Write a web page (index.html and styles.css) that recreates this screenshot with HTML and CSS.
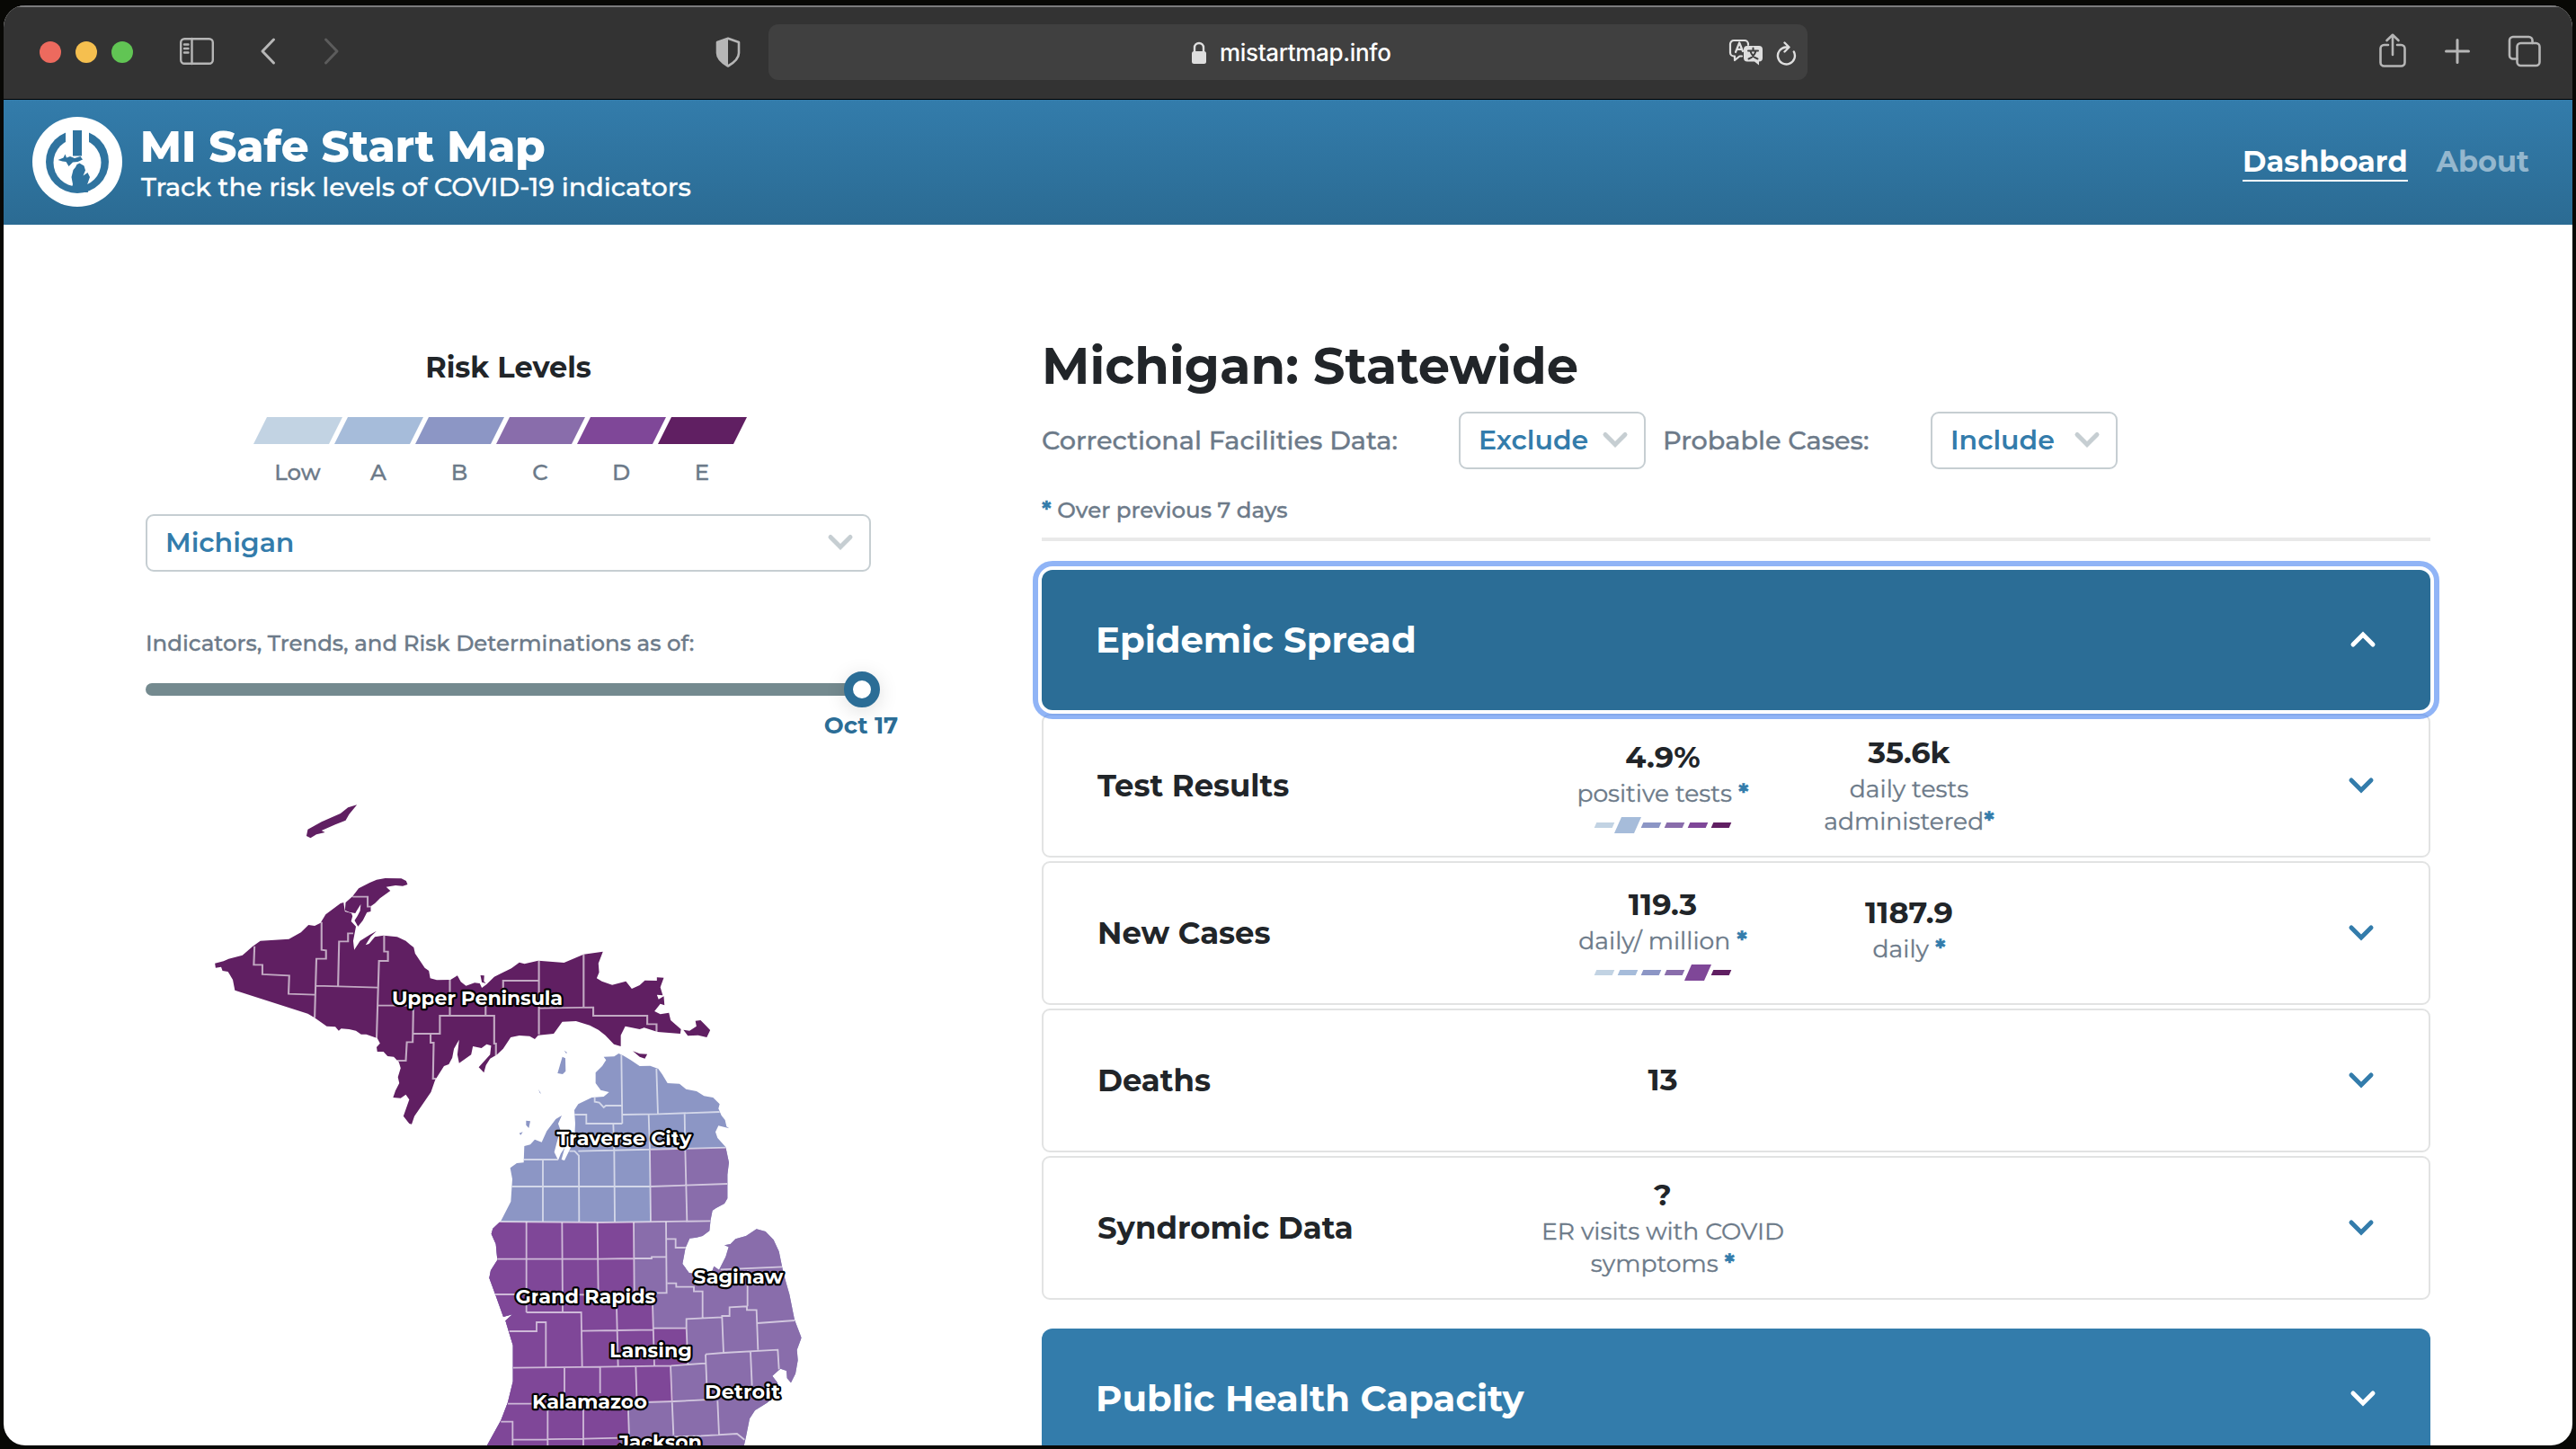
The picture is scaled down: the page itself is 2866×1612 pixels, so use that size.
FILE: index.html
```
<!DOCTYPE html>
<html lang="en">
<head>
<meta charset="utf-8">
<title>MI Safe Start Map</title>
<link rel="stylesheet" href="styles.css">
</head>
<body>
<div class="window">
  <div class="toolbar">
    <div class="lights"><i class="light red"></i><i class="light yellow"></i><i class="light green"></i></div>
    <svg class="ico sidebar" width="40" height="32" viewBox="0 0 40 32"><rect x="2.2" y="2.2" width="35.6" height="27.6" rx="4"/><path d="M14.5 2v28M6 8.5h4.5M6 13h4.5M6 17.5h4.5"/></svg>
    <svg class="ico back" width="20" height="32" viewBox="0 0 20 32"><path d="M16.500 3L4 16l12.500 13"/></svg>
    <svg class="ico forward" width="20" height="32" viewBox="0 0 20 32"><path d="M3.500 3L16 16 3.500 29"/></svg>
    <svg class="shield" width="30" height="36" viewBox="0 0 30 36"><path class="shield-line" d="M15 2.800L27 7v12c0 6-5 10.500-12 14.500C8 29.500 3 25 3 19V7z"/><path class="shield-fill" d="M15 2.800v30.700C8 29.500 3 25 3 19V7z"/></svg>
    <div class="urlbar">
      <div class="address">
        <svg class="lock" width="18" height="26" viewBox="0 0 18 26"><path class="lock-shackle" d="M4 12V7a5 5 0 0 1 10 0v5"/><rect class="lock-body" x="1" y="11" width="16" height="14" rx="2.500"/></svg>
        <span>mistartmap.info</span>
      </div>
      <svg class="translate" width="40" height="30" viewBox="0 0 40 30"><path class="thin" d="M15 19.500h-2.500L7 24v-4.500H6a4 4 0 0 1-4-4V6a4 4 0 0 1 4-4h12a4 4 0 0 1 4 4v1"/><path class="thin" d="M8 15l4.200-10.500L16 14M9.500 11.800h5"/><path class="bubble" d="M21 8h13a4 4 0 0 1 4 4v9.500a4 4 0 0 1-4 4v4l-5-4h-8a4 4 0 0 1-4-4V12a4 4 0 0 1 4-4z"/><path class="glyph" d="M27.500 10.500v2.500M22 13.500h11M30.500 13.500c-1 4-4 7.500-8 9M24.500 14c1 3.500 4 7 8 8.500"/></svg>
      <svg class="reload" width="24" height="28" viewBox="0 0 24 28"><path d="M20.800 12.500A9.500 9.500 0 1 1 12 7.500h2.500M10.500 2.500l5 5-5 5"/></svg>
    </div>
    <svg class="ico share" width="32" height="40" viewBox="0 0 32 40"><path d="M11 14H6.500a4 4 0 0 0-4 4v15.500a4 4 0 0 0 4 4h19a4 4 0 0 0 4-4V18a4 4 0 0 0-4-4H21M16 25V3.500M9.500 9L16 2.800 22.500 9"/></svg>
    <svg class="ico plus" width="30" height="30" viewBox="0 0 30 30"><path d="M15 2.500v25M2.500 15h25"/></svg>
    <svg class="ico tabs" width="38" height="36" viewBox="0 0 38 36"><rect x="10.500" y="9" width="25" height="25" rx="4"/><path d="M27.500 9V6a4 4 0 0 0-4-4H6a4 4 0 0 0-4 4v16.500a4 4 0 0 0 4 4h4.500"/></svg>
  </div>

  <header class="site-header">
    <svg class="logo" width="100" height="100" viewBox="0 0 100 100">
      <circle class="w" cx="50" cy="50" r="50"/>
      <circle class="b" cx="50" cy="50" r="35"/>
      <circle class="w" cx="50" cy="51" r="26.500"/>
      <path class="w" d="M37 12h26v24H37z"/>
      <path class="b" d="M45 15h10v28.500H45z"/>
      <path class="b" d="M28.500 48l6-2.500 2-4 1.500 4 4-1.500 5 2 6.500-2 2.500 3.500-5.500 2.500-5.500.5-4.500 4.500-3-5-4-.5z"/>
      <path class="b" d="M49.500 53l3-1.500 5 3 1.500 5-2.500 6 5-3.500 2.500 5-3 8.500L62 84H42l3-9-1.500-8 2-8 2.500-3z"/>
    </svg>
    <div class="brand">
      <div class="brand-name">MI Safe Start Map</div>
      <div class="brand-tag">Track the risk levels of COVID-19 indicators</div>
    </div>
    <nav class="nav"><a class="active">Dashboard</a><a>About</a></nav>
  </header>

  <main class="page">
    <section class="left">
      <h3>Risk Levels</h3>
      <div class="legend">
        <div class="level low"><i></i><span>Low</span></div>
        <div class="level a"><i></i><span>A</span></div>
        <div class="level b"><i></i><span>B</span></div>
        <div class="level c"><i></i><span>C</span></div>
        <div class="level d"><i></i><span>D</span></div>
        <div class="level e"><i></i><span>E</span></div>
      </div>
      <div class="select region">Michigan<svg class="chev" width="30" height="20" viewBox="0 0 30 20"><path d="M4 4.500l11 11 11-11"/></svg></div>
      <div class="asof">Indicators, Trends, and Risk Determinations as of:</div>
      <div class="slider"><div class="knob"></div></div>
      <div class="date">Oct 17</div>
      <svg class="map" width="812" height="728" viewBox="162 880 812 728">
        <defs>
          <clipPath id="lower"><use href="#lp"/></clipPath>
        </defs>
        <g class="upper" transform="translate(220 880) scale(.38265 .33333)">
          <path class="fe" d="M50 575L75 568 90 560 130 548 160 518 182 500 265 494 300 472 322 447 340 450 357 440 372 412 415 375 424 372 428 402 447 408 450 418 446 435 460 452 452 500 455 530 472 500 500 480 520 467 503 486 488 514 498 510 515 487 540 482 580 487 605 500 617 512 628 522 632 542 660 590 672 600 676 625 695 631 735 630 755 616 765 637 780 650 805 640 820 642 826 657 840 645 862 620 880 610 912 592 935 572 950 577 990 566 1065 573 1122 545 1178 536 1165 575 1167 605 1160 625 1175 635 1205 647 1245 635 1262 660 1285 648 1300 632 1335 633 1335 622 1355 623 1345 655 1352 682 1335 680 1340 695 1355 685 1357 715 1345 710 1328 735 1345 745 1370 740 1375 765 1405 795 1403 810 1337 804 1298 790 1285 795 1243 785 1230 815 1230 852 1210 845 1185 815 1165 797 1140 782 1100 768 1060 770 1035 810 990 815 980 828 965 818 935 816 910 822 888 860 870 880 850 893 838 915 832 940 817 922 850 880 853 850 840 845 825 858 800 852 795 880 760 908 755 880 760 830 745 860 740 890 730 912 716 918 690 965 678 1005 630 1085 622 1112 615 1110 598 1085 615 1030 605 1013 590 1025 568 1023 575 1000 586 975 582 955 590 925 585 905 570 887 552 885 540 870 522 870 520 855 530 842 522 825 490 812 475 812 460 800 440 795 417 793 410 800 400 787 375 785 340 757 320 743 108 665 102 630 88 603 72 600 68 587 52 590z"/>
          <path class="fe" d="M430 372L450 352 468 325 500 306 520 296 545 291 592 292 606 300 610 312 596 317 575 315 548 320 560 333 530 358 515 375 503 385 503 402 492 405 480 432 466 452 456 432 464 418 472 400 474 378 462 400 458 408 440 404 428 398zM463 46L437 55 415 75 360 103 320 128 316 150 328 157 345 145 370 138 360 132 400 112 430 98 440 78zM1412 797L1430 800 1450 785 1447 767 1462 765 1475 780 1490 798 1480 822 1455 815 1425 817zM1265 868L1285 877 1307 878 1300 893 1285 887zM822 615L833 616 832 635 838 642 826 638z"/>
          <path class="county" d="M165 518L163 580H188V612L266 616 264 677 340 680M360 437V530L373 532V560L345 560 340 757M345 650L522 656M452 475H437V502H411L408 650M542 482V536H553V567H527L520 825M525 716H627M627 716L625 838H608L605 900H580M627 810H704V750H862V843H867V882M733 630V750M677 810V840H686L684 960H694M837 750V690M888 660V633H992M992 566V812M992 725L1150 722V750H1307V778H1334V804M1122 545V720M450 353H494V386H503"/>
        </g>
        <g transform="translate(520 1140) scale(.33333)">
          <path class="fb" id="lp" d="M505 96L520 103 545 118 575 138 610 137 637 147 650 165 668 195 708 197 730 215 765 222 790 238 820 243 842 265 838 280 848 303 860 318 865 340 874 346 838 337 828 358 835 378 862 408 873 460 868 500 868 580 858 597 830 612 818 620 812 650 808 688 785 705 765 710 742 713 728 745 718 798 740 828 790 836 815 828 823 806 840 818 862 775 872 742 858 736 878 732 895 715 930 705 965 682 995 690 1022 718 1040 757 1055 830 1075 900 1092 985 1115 1045 1100 1085 1103 1120 1095 1165 1080 1195 1067 1180 1065 1155 1045 1148 1018 1172 1035 1195 1030 1235 1000 1262 960 1287 942 1315 938 1335 930 1375 920 1420H55L65 1405 112 1320 135 1260 152 1190 152 1070 127 988 150 967 120 975 95 905 73 845 78 820 100 785 95 732 80 698 85 680 112 655 145 590 148 545 150 515 143 478 165 462 188 460 190 405 210 400 225 383 248 392 265 355 295 315 315 303 303 330 310 350 290 425 303 452 312 430 325 410 314 450 324 453 345 410 358 370 360 330 357 285 370 265 415 243 455 240 473 225 445 218 428 195 428 160 450 138 463 118 455 107 490 106z"/>
          <path class="fb" d="M317 107L327 112 328 155 318 165 301 162zM323 86L333 93 330 96zM237 215L246 230 242 228zM196 320L210 322 205 345 196 335zM173 362L185 358 178 368z"/>
          <g clip-path="url(#lower)">
            <path class="fc" d="M0 658H612L609 415 870 410 900 400H1200V1450H0z"/>
            <path class="fd" d="M0 658L555 660 558 900 618 896 622 1015 731 1012 736 1132 678 1138 688 1258 536 1262 540 1380 508 1382V1450H0z"/>
            <path class="county" d="M514 100L517 330M425 243V257L440 260 455 276 462 270H516M350 300H397V330H517M517 300L638 298 842 291M631 147L636 298M605 300L609 420 612 658M487 332L490 420 492 658M725 298L727 415 733 655M370 422L870 410M340 422H358L372 437 373 658M188 450H303M252 450V658M148 540H370L610 540 868 531M108 657L450 660 812 655"/>
            <path class="county" transform="translate(0 630)" d="M197 28V330M316 30L318 328M434 30L437 270M555 30L557 262M98 152H435L555 150H615V145H662M663 28L665 265H620M665 85H695V114H730M668 233H697V245H756V260H785V350M90 270H165L560 272M197 330H380L383 510M140 393H231V363H262V513M383 392L500 390 620 388 622 383 731 382M498 310L503 510M618 300L624 508M152 515L443 512 680 508 795 500M731 382L736 502M731 382V352L850 346V342L875 342V313L933 310V322H965L970 455M850 346L855 465M795 470L855 465 1036 455 1040 520M795 470L800 600M935 310V190M845 187L1052 178M968 366L1092 357M945 462L950 575M324 513V600M443 512V600M562 510L565 610M678 508L688 740M590 630L690 627 830 620M135 635H215M112 695H151V774M268 650V774M387 650V774M152 755L387 752 540 748M536 632L540 750M835 625L840 738M690 745L780 742 900 735 925 755"/>
          </g>
        </g>
        <g class="labels">
          <text x="436" y="1117.500" textLength="190">Upper Peninsula</text>
          <text x="619.500" y="1274" textLength="150">Traverse City</text>
          <text x="573.500" y="1450" textLength="156">Grand Rapids</text>
          <text x="771.500" y="1428" textLength="100">Saginaw</text>
          <text x="678" y="1510" textLength="92">Lansing</text>
          <text x="784" y="1556" textLength="84">Detroit</text>
          <text x="592" y="1566.500" textLength="128">Kalamazoo</text>
          <text x="688" y="1612" textLength="93">Jackson</text>
        </g>
      </svg>
    </section>

    <section class="right">
      <h1>Michigan: Statewide</h1>
      <div class="filters">
        <label>Correctional Facilities Data:</label>
        <div class="select">Exclude<svg class="chev" width="30" height="20" viewBox="0 0 30 20"><path d="M4 4.500l11 11 11-11"/></svg></div>
        <label>Probable Cases:</label>
        <div class="select">Include<svg class="chev" width="30" height="20" viewBox="0 0 30 20"><path d="M4 4.500l11 11 11-11"/></svg></div>
      </div>
      <div class="note"><b>*</b> Over previous 7 days</div>

      <div class="section-bar open"><span>Epidemic Spread</span><svg class="chev" width="32" height="22" viewBox="0 0 32 22"><path d="M5 16L16 5l11 11"/></svg></div>
      <div class="cards">
        <article class="card">
          <h2>Test Results</h2>
          <div class="stat"><strong>4.9%</strong><p>positive tests <b>*</b></p><div class="scale"><i class="low"></i><i class="a on"></i><i class="b"></i><i class="c"></i><i class="d"></i><i class="e"></i></div></div>
          <div class="stat"><strong>35.6k</strong><p>daily tests<br>administered<b>*</b></p></div>
          <svg class="chev" width="32" height="22" viewBox="0 0 32 22"><path d="M5 5l11 11L27 5"/></svg>
        </article>
        <article class="card">
          <h2>New Cases</h2>
          <div class="stat"><strong>119.3</strong><p>daily/ million <b>*</b></p><div class="scale"><i class="low"></i><i class="a"></i><i class="b"></i><i class="c"></i><i class="d on"></i><i class="e"></i></div></div>
          <div class="stat raised"><strong>1187.9</strong><p>daily <b>*</b></p></div>
          <svg class="chev" width="32" height="22" viewBox="0 0 32 22"><path d="M5 5l11 11L27 5"/></svg>
        </article>
        <article class="card">
          <h2>Deaths</h2>
          <div class="stat"><strong>13</strong></div>
          <div class="stat"></div>
          <svg class="chev" width="32" height="22" viewBox="0 0 32 22"><path d="M5 5l11 11L27 5"/></svg>
        </article>
        <article class="card">
          <h2>Syndromic Data</h2>
          <div class="stat"><strong>?</strong><p>ER visits with COVID<br>symptoms <b>*</b></p></div>
          <div class="stat"></div>
          <svg class="chev" width="32" height="22" viewBox="0 0 32 22"><path d="M5 5l11 11L27 5"/></svg>
        </article>
      </div>
      <div class="section-bar"><span>Public Health Capacity</span><svg class="chev" width="32" height="22" viewBox="0 0 32 22"><path d="M5 5l11 11L27 5"/></svg></div>
    </section>
  </main>
</div>
</body>
</html>
```
FILE: styles.css
```
:root {
  --low: #c2d3e3;
  --a: #a6bcda;
  --b: #8c96c5;
  --c: #896dab;
  --d: #7f4798;
  --e: #601f62;
  --blue: #337cab;
  --deep: #2b6d96;
  --slate: #6c7a89;
  --ink: #212529;
}
* { box-sizing: border-box; margin: 0; }
html { overflow: hidden; }
body {
  height: 1612px;
  overflow: hidden;
  padding: 6px 4px 4px;
  background: #080805;
  font-family: Montserrat, Inter, "Open Sans", sans-serif;
  color: var(--ink);
}
svg { display: block; flex: none; }

.window {
  height: 1602px;
  overflow: hidden;
  border-radius: 24px;
  background: #fff;
}

/* Browser toolbar */
.toolbar {
  display: flex;
  align-items: flex-start;
  height: 105px;
  border-top: 2px solid #7b7b7d;
  border-bottom: 1px solid #000;
  background: #333;
  padding-top: 19px;
}
.lights { display: flex; gap: 16px; margin: 19px 0 0 40px; }
.light { width: 24px; height: 24px; border-radius: 50%; }
.red { background: #ed6a5e; }
.yellow { background: #f5bf4f; }
.green { background: #61c554; }
.ico { fill: none; stroke: #b6b6b6; stroke-width: 2.6; stroke-linecap: round; stroke-linejoin: round; }
.sidebar { margin: 14px 0 0 51px; stroke-width: 2.4; }
.back { margin: 14px 0 0 49px; stroke-width: 3; }
.forward { margin: 14px 0 0 51px; stroke: #5c5c5c; stroke-width: 3; }
.shield { margin: 13px 0 0 416px; }
.shield-line { fill: none; stroke: #b6b6b6; stroke-width: 2.6; stroke-linejoin: round; }
.shield-fill { fill: #b6b6b6; }
.urlbar {
  display: flex;
  align-items: center;
  width: 1156px;
  height: 62px;
  margin-left: 30px;
  border-radius: 11px;
  background: #404040;
}
.address {
  flex: 1;
  display: flex;
  align-items: center;
  padding: 2px 0 0 470px;
  gap: 14px;
  color: #fff;
  font: 500 26px/62px Inter, sans-serif;
  letter-spacing: -.013em;
}
.lock-shackle { fill: none; stroke: #dedede; stroke-width: 2.4; }
.lock-body { fill: #dedede; }
.translate { margin-right: 12px; fill: none; stroke-linecap: round; stroke-linejoin: round; }
.translate .thin { stroke: #dedede; stroke-width: 2.2; }
.translate .bubble { fill: #dedede; }
.translate .glyph { stroke: #404040; stroke-width: 2; }
.reload { margin: 2px 12px 0 0; fill: none; stroke: #dedede; stroke-width: 2.4; stroke-linecap: round; stroke-linejoin: round; }
.share { margin: 9px 0 0 635px; }
.plus { margin: 15px 0 0 41px; stroke-width: 3; }
.tabs { margin: 12px 0 0 41px; }

/* Site header */
.site-header {
  display: flex;
  align-items: center;
  height: 139px;
  padding: 0 48px 0 32px;
  background: linear-gradient(#337cab, #2b6b93);
  color: #fff;
}
.logo { margin-top: -2px; }
.logo .w { fill: #fff; }
.logo .b { fill: #2f739f; }
.brand { flex: 1; padding-left: 20px; }
.brand-name { font-size: 48.1px; font-weight: 800; line-height: 54px; margin-top: 1px; }
.brand-tag { font-size: 28.65px; font-weight: 500; line-height: 36px; padding-left: 1px; }
.nav { display: flex; gap: 32px; font-size: 32px; font-weight: 700; line-height: 42px; margin-top: -1px; }
.nav a { height: 43px; color: #94b7ce; }
.nav .active { color: #fff; border-bottom: 2px solid #fff; }

.page { display: flex; gap: 190px; padding-left: 158px; }

/* Left column */
.left { width: 807px; padding-top: 137px; }
h3 { text-align: center; font-size: 32px; font-weight: 700; line-height: 44px; }
.legend { display: flex; margin: 33px 0 0 124px; }
.level { width: 90px; }
.level i { display: block; width: 84px; height: 30px; margin-left: -4px; clip-path: polygon(18% 0, 118% 0, 100% 100%, 0 100%); padding-right: 15px; width: 99px; clip-path: polygon(15px 0, 100% 0, 84px 100%, 0 100%); }
.level span { display: block; margin-top: 16px; text-align: center; font-size: 24.4px; font-weight: 500; line-height: 31px; color: var(--slate); }
.low i, i.low { background: var(--low); }
.a i, i.a { background: var(--a); }
.b i, i.b { background: var(--b); }
.c i, i.c { background: var(--c); }
.d i, i.d { background: var(--d); }
.e i, i.e { background: var(--e); }

.select {
  display: flex;
  align-items: center;
  justify-content: space-between;
  height: 64px;
  border: 2px solid #c6ced2;
  border-radius: 9px;
  padding: 0 17px 2px 20px;
  color: var(--blue);
  font-size: 30px;
  font-weight: 600;
}
.select .chev { stroke: #c6ced2; }
.region { margin-top: 31px; }
.chev { fill: none; stroke: var(--blue); stroke-width: 5; stroke-linecap: round; stroke-linejoin: miter; }

.asof, .note, .level span, .filters label, .stat p, .brand-tag { -webkit-text-stroke: .35px; }
.asof { margin-top: 64px; font-size: 24.45px; font-weight: 500; line-height: 30px; color: var(--slate); }
.slider {
  display: flex;
  align-items: center;
  justify-content: flex-end;
  height: 14px;
  margin-top: 30px;
  border-radius: 7px;
  background: #748a8f;
}
.knob {
  flex: none;
  width: 40px;
  height: 40px;
  margin-right: -10px;
  border: 10px solid var(--deep);
  border-radius: 50%;
  background: #fff;
  box-shadow: 0 4px 22px rgba(0, 0, 0, .13);
}
.date { width: 100px; margin: 17px 0 0 746px; text-align: center; font-size: 26px; font-weight: 700; line-height: 32px; color: var(--deep); }
.map { margin-top: 57px; }

.fe { fill: var(--e); }
.fb { fill: var(--b); }
.fc { fill: var(--c); }
.fd { fill: var(--d); }
.county { fill: none; stroke: #fff; stroke-opacity: .62; stroke-width: 5.5; }
.labels { fill: #fff; stroke: #000; stroke-width: 4.5; stroke-linejoin: round; paint-order: stroke; font-size: 22.4px; font-weight: 700; }

/* Right column */
.right { width: 1545px; padding-top: 122px; }
h1 { font-size: 56px; font-weight: 700; line-height: 68px; padding-top: 1px; margin-bottom: -1px; }
.filters { display: grid; grid-template-columns: 464px 208px 317px 208px; align-items: center; margin-top: 18px; }
.filters label { font-size: 28.7px; font-weight: 500; color: var(--slate); padding-bottom: 2px; }
.filters label + .select + label { padding-left: 19px; }
.filters .select { padding-right: 17px; }
.note { margin-top: 29px; padding-bottom: 15px; border-bottom: 4px solid #e9e9e9; font-size: 24.5px; font-weight: 500; line-height: 32px; color: var(--slate); }
.note b, .stat b { color: var(--blue); font-weight: 700; }

.section-bar {
  display: flex;
  align-items: center;
  justify-content: space-between;
  height: 156px;
  margin-top: 32px;
  padding: 0 59px;
  border-radius: 12px;
  background: var(--blue);
  color: #fff;
  font-size: 40.15px;
  font-weight: 700;
}
.section-bar span { padding: 0 0 2px 1px; }
.section-bar .chev { stroke: #fff; }
.section-bar.open {
  background: var(--deep);
  outline: 6px solid rgba(70, 130, 240, .6);
  outline-offset: 4px;
}

.cards { display: grid; gap: 4px; margin-top: 4px; }
.card {
  display: grid;
  grid-template-columns: 491px 276px 16px 240px 1fr;
  align-items: center;
  height: 160px;
  padding: 0 59px 0 60px;
  border: 2px solid #e2e3e3;
  border-radius: 9px;
}
.card .chev { grid-column: 5; justify-self: end; }
.card h2 { font-size: 33.9px; font-weight: 700; line-height: 44px; }
.stat { display: flex; flex-direction: column; align-items: center; text-align: center; }
.stat + .stat { grid-column: 4; }
.stat strong { font-size: 33.6px; font-weight: 700; line-height: 41px; padding-bottom: 3px; }
.stat p { font-size: 26.6px; line-height: 36px; color: var(--slate); white-space: nowrap; }
.raised { padding-bottom: 8px; }
.scale { display: flex; align-items: center; gap: 6px; height: 18px; margin-top: 8px; }
.scale i { width: 20px; height: 6px; transform: skewX(-24deg); }
.scale .on { width: 22px; height: 18px; margin: 0 -1px; }
```
